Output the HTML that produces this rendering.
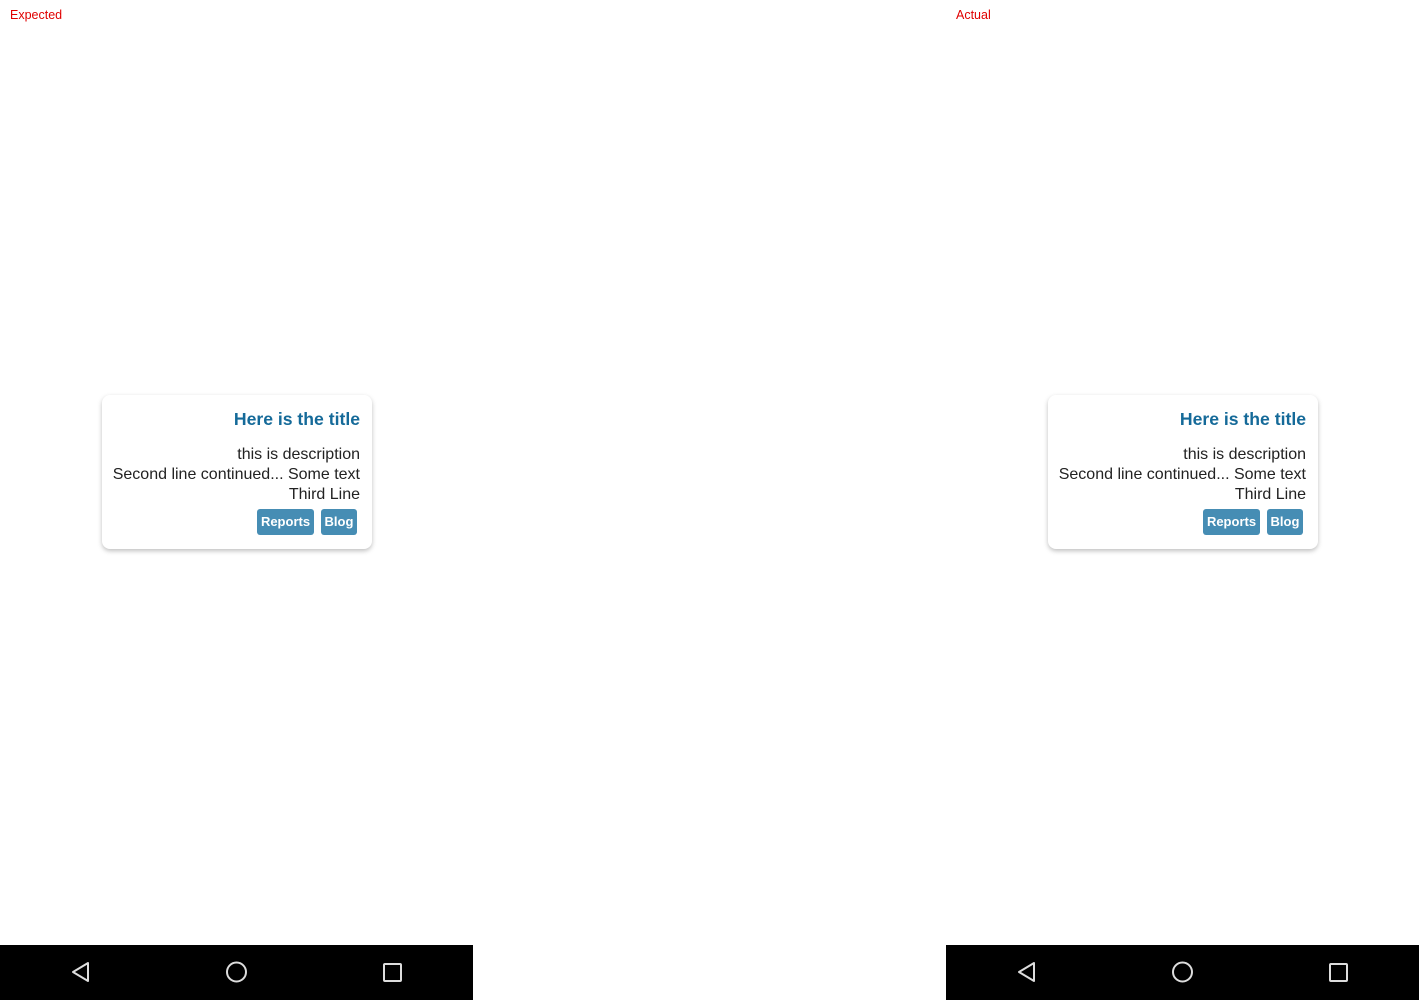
<!DOCTYPE html>
<html><head><meta charset="utf-8"><style>
html,body{margin:0;padding:0;width:1419px;height:1000px;background:#fff;overflow:hidden;font-family:"Liberation Sans","DejaVu Sans",sans-serif;}
.panel{position:absolute;top:0;width:473px;height:1000px;background:#fff;}
.lbl{position:absolute;left:10px;top:8px;font-size:12.5px;color:#e00000;}
.card{position:absolute;left:102px;top:395px;width:270px;height:154px;background:#fff;border-radius:8px;box-shadow:0 2px 5px rgba(0,0,0,0.25);}
.t{position:absolute;right:12px;top:14px;font-size:17.6px;font-weight:bold;color:#156a99;white-space:nowrap;}
.d{position:absolute;right:12px;top:50px;font-size:16px;line-height:20px;color:#222;text-align:right;white-space:nowrap;}
.b{position:absolute;top:114px;height:26px;line-height:26px;background:#468db4;color:#fff;font-size:13px;font-weight:bold;border-radius:3px;text-align:center;}
.nav{position:absolute;left:0;top:945px;width:473px;height:55px;background:#000;}
</style></head><body>
<div class="panel" style="left:0">
<div class="lbl">Expected</div>
<div class="card"><div class="t">Here is the title</div>
<div class="d">this is description<br>Second line continued... Some text<br>Third Line</div>
<div class="b" style="left:155px;width:57px">Reports</div>
<div class="b" style="left:219px;width:36px">Blog</div></div>
<div class="nav"><svg width="473" height="55">
<path d="M88 963 L73 972 L88 981 Z" fill="none" stroke="#ddd" stroke-width="2" stroke-linejoin="round" transform="translate(0,-945)"/>
<circle cx="236.5" cy="27" r="9.5" fill="none" stroke="#ddd" stroke-width="2"/>
<rect x="384" y="19" width="17" height="17" fill="none" stroke="#ddd" stroke-width="2" rx="1"/>
</svg></div>
</div>
<div class="panel" style="left:946px">
<div class="lbl">Actual</div>
<div class="card"><div class="t">Here is the title</div>
<div class="d">this is description<br>Second line continued... Some text<br>Third Line</div>
<div class="b" style="left:155px;width:57px">Reports</div>
<div class="b" style="left:219px;width:36px">Blog</div></div>
<div class="nav"><svg width="473" height="55">
<path d="M88 963 L73 972 L88 981 Z" fill="none" stroke="#ddd" stroke-width="2" stroke-linejoin="round" transform="translate(0,-945)"/>
<circle cx="236.5" cy="27" r="9.5" fill="none" stroke="#ddd" stroke-width="2"/>
<rect x="384" y="19" width="17" height="17" fill="none" stroke="#ddd" stroke-width="2" rx="1"/>
</svg></div>
</div>
</body></html>
